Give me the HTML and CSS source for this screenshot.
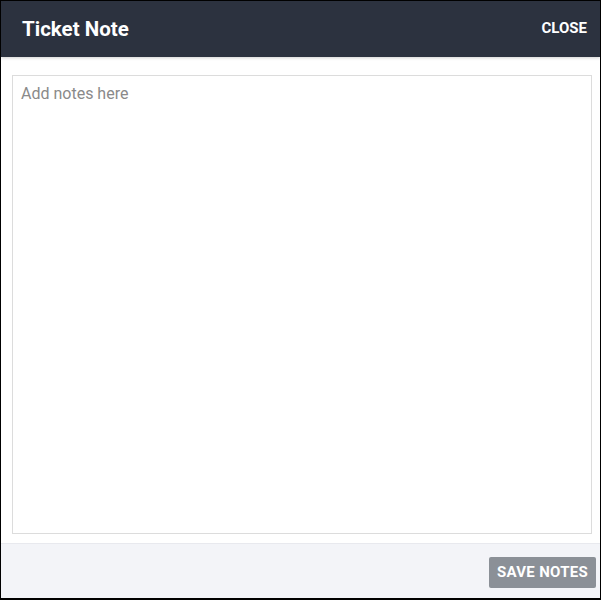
FILE: index.html
```html
<!DOCTYPE html>
<html>
<head>
<meta charset="utf-8">
<link rel="stylesheet" href="styles.css">
</head>
<body>
<div class="frame">
  <header class="head">
    <h1 class="title">Ticket Note</h1>
    <span class="close">CLOSE</span>
  </header>
  <main class="body">
    <textarea class="notes" placeholder="Add notes here"></textarea>
  </main>
  <footer class="foot">
    <button class="save">SAVE NOTES</button>
  </footer>
</div>
</body>
</html>
```
FILE: styles.css
```css
html, body {
  margin: 0;
  padding: 0;
  background: #fff;
}
.frame {
  width: 601px;
  height: 600px;
  box-sizing: border-box;
  border-left: 1px solid #000;
  border-top: 1px solid #000;
  border-right: 1px solid #000;
  border-bottom: 2px solid #000;
  display: flex;
  flex-direction: column;
  font-family: Roboto, "Liberation Sans", sans-serif;
}
.head {
  height: 56px;
  flex: none;
  background: #2c323f;
  display: flex;
  align-items: center;
  justify-content: space-between;
  padding: 0 13px 0 21px;
  box-shadow: 0 1px 3px rgba(0,0,0,0.18);
  position: relative;
  z-index: 1;
}
.title {
  margin: 0;
  color: #fff;
  font-size: 20.5px;
  font-weight: 700;
  line-height: 24px;
}
.close {
  color: #fff;
  font-size: 15px;
  font-weight: 700;
  line-height: 16px;
  margin-top: -2px;
}
.body {
  flex: 1;
  padding: 18px 8px 9px 11px;
  display: flex;
}
.notes {
  flex: 1;
  margin: 0;
  border: 1px solid #dcdcdc;
  resize: none;
  padding: 8px 8px;
  font-family: Roboto, "Liberation Sans", sans-serif;
  font-size: 16px;
  line-height: 20px;
  color: #333;
  outline: none;
}
.notes::placeholder {
  color: #8a8a8a;
}
.foot {
  height: 55px;
  flex: none;
  background: #f3f4f8;
  border-top: 1px solid #e8e9ee;
  display: flex;
  justify-content: flex-end;
  align-items: flex-start;
  padding: 13px 4px 0 0;
  box-sizing: border-box;
}
.save {
  width: 107px;
  height: 31px;
  border: none;
  border-radius: 2px;
  background: #8b9097;
  color: #fff;
  font-family: Roboto, "Liberation Sans", sans-serif;
  font-size: 15px;
  font-weight: 700;
  letter-spacing: 0.3px;
  padding: 0 0 1px;
}
```
